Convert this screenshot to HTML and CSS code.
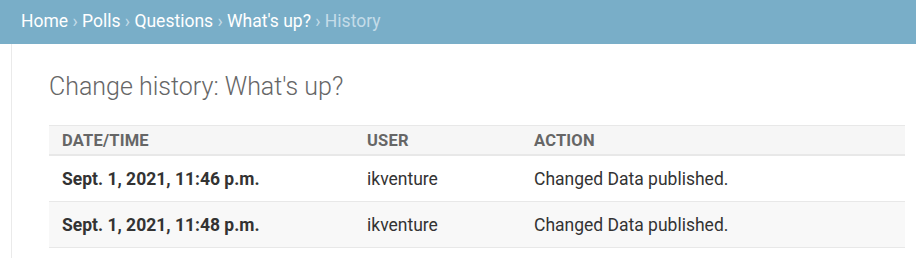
FILE: index.html
```html
<!DOCTYPE html>
<html lang="en">
<head>
    <meta charset="UTF-8">
    <title>Change history: What's up? | Django site admin</title>
    <link rel="stylesheet" href="styles.css">
</head>
<body>
    <div class="breadcrumbs">
        <a href="#">Home</a> &rsaquo;
        <a href="#">Polls</a> &rsaquo;
        <a href="#">Questions</a> &rsaquo;
        <a href="#">What's up?</a> &rsaquo;
        History
    </div>

    <div class="main">
        <div class="nav-toggle"></div>
        <div class="content">
            <h1>Change history: What's up?</h1>

            <table id="change-history">
                <thead>
                    <tr>
                        <th class="col-date">Date/time</th>
                        <th class="col-user">User</th>
                        <th>Action</th>
                    </tr>
                </thead>
                <tbody>
                    <tr>
                        <th>Sept. 1, 2021, 11:46 p.m.</th>
                        <td>ikventure</td>
                        <td>Changed Data published.</td>
                    </tr>
                    <tr class="row2">
                        <th>Sept. 1, 2021, 11:48 p.m.</th>
                        <td>ikventure</td>
                        <td>Changed Data published.</td>
                    </tr>
                </tbody>
            </table>
        </div>
    </div>
</body>
</html>
```

FILE: styles.css
```css
body {
    margin: 0;
    font-family: Roboto, "Liberation Sans", sans-serif;
    color: #333;
    background: #fff;
}

a {
    text-decoration: none;
}

.breadcrumbs {
    height: 44px;
    box-sizing: border-box;
    padding: 10px 21px 0;
    background: #79aec8;
    color: #c4dce8;
    font-size: 17.5px;
    line-height: 22px;
}

.breadcrumbs a {
    color: #fff;
}

.main {
    display: flex;
    min-height: 214px;
}

.nav-toggle {
    flex: 0 0 11px;
    border-right: 1px solid #eaeaea;
}

.content {
    flex: 1;
    padding: 26px 11px 0 37px;
}

h1 {
    margin: 0 0 21px;
    font-size: 25px;
    font-weight: 300;
    line-height: 34px;
    color: #666;
}

table {
    width: 856px;
    border-collapse: collapse;
    table-layout: fixed;
}

.col-date {
    width: 279px;
}

.col-user {
    width: 141px;
}

th, td {
    text-align: left;
    padding: 0 13px;
    font-size: 17.5px;
    border-bottom: 1px solid #e8e8e8;
}

thead th {
    height: 28px;
    font-size: 16.5px;
    font-weight: 700;
    letter-spacing: 0.2px;
    text-transform: uppercase;
    color: #666;
    background: #f6f6f6;
    border-top: 1px solid #e8e8e8;
    border-bottom: 2px solid #e8e8e8;
}

tbody th, tbody td {
    height: 45px;
}

tbody th {
    font-weight: 700;
}

.row2 {
    background: #f8f8f8;
}
```
